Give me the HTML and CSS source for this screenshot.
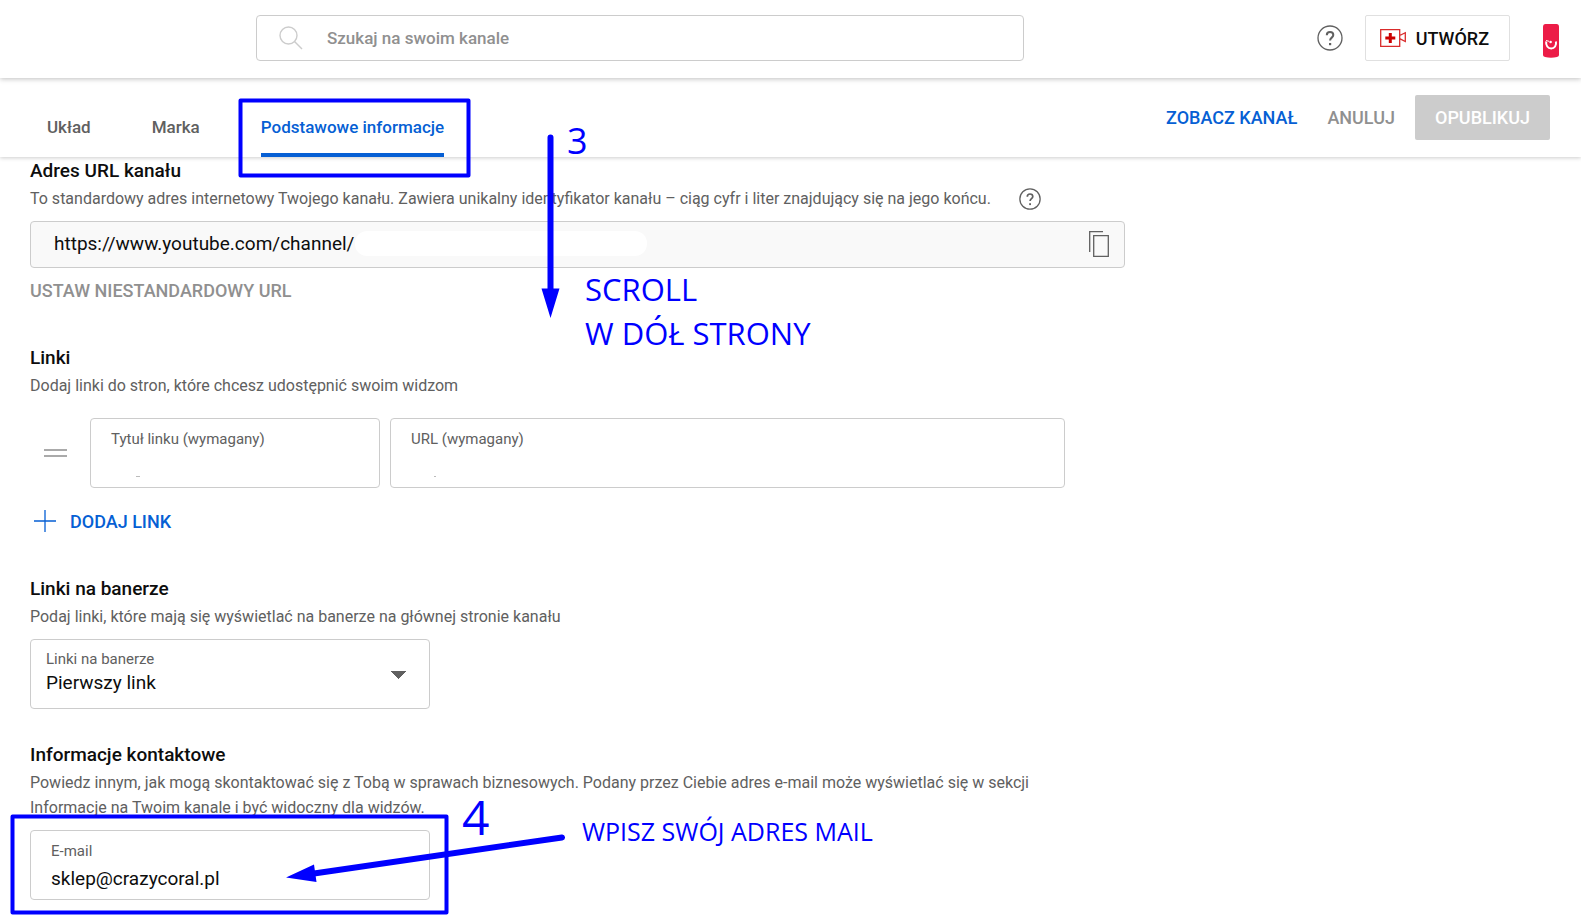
FILE: index.html
```
<!DOCTYPE html>
<html lang="pl">

<head>
  <meta charset="utf-8">
  <title>Dostosowywanie kanału</title>
  <link rel="stylesheet" href="styles.css">
</head>

<body>
  <header class="topbar">
    <label class="search">
      <svg width="24" height="24" viewBox="0 0 24 24" fill="none" stroke="#ccc" stroke-width="1.4" aria-hidden="true">
        <circle cx="9.5" cy="9.5" r="8.5"/>
        <path d="M15.5 15.5L23 23"/>
      </svg>
      <input type="text" placeholder="Szukaj na swoim kanale" aria-label="Szukaj na swoim kanale">
    </label>
    <div class="topbar-actions">
      <button class="icon-button" aria-label="Pomoc">
        <svg width="26" height="26" viewBox="0 0 26 26" fill="none" stroke="#606060" aria-hidden="true">
          <circle cx="13" cy="13" r="12" stroke-width="1.3"/>
          <path d="M9.8 10.3c0-2 1.4-3.2 3.2-3.2s3.3 1.2 3.3 3c0 2.5-3.2 2.6-3.2 5.3" stroke-width="2"/>
          <path d="M13.1 18v2.2" stroke-width="2.2"/>
        </svg>
      </button>
      <button class="create">
        <svg width="26" height="18" viewBox="0 0 26 18" fill="none" stroke="#d92b2b" stroke-width="1.3" aria-hidden="true">
          <path d="M.7.7h19v16.6h-19zM19.7 6.500L25.300 3.700v8.800L19.700 9.700"/>
          <path d="M10.300 4v10M5.300 9h10" stroke="#c00" stroke-width="3"/>
        </svg>
        UTWÓRZ
      </button>
      <button class="icon-button" aria-label="Konto">
        <svg width="18" height="42" viewBox="0 -6 18 42" aria-hidden="true">
          <path d="M3.500 1h11Q17 1 17 4v28q0 1.500-2 2-6 1.500-12 0-2-.5-2-2V4q0-3 2.500-3z" fill="#ec1c47"/>
          <path d="M4.200 18.500c-.6 4 1.700 7 5 7s5.500-3 4.700-7" fill="none" stroke="#fff" stroke-width="2"/>
          <path d="M4 17.500l3 .8" stroke="#fff"/>
          <circle cx="8.600" cy="19" r="1.300" fill="#fff"/>
        </svg>
      </button>
    </div>
  </header>

  <div class="tabbar">
    <nav class="tabs">
      <a href="#uklad">Układ</a>
      <a href="#marka">Marka</a>
      <a href="#informacje" class="active">Podstawowe informacje</a>
    </nav>
    <div class="tabbar-actions">
      <a href="#kanal" class="view">ZOBACZ KANAŁ</a>
      <button class="cancel">ANULUJ</button>
      <button class="publish">OPUBLIKUJ</button>
    </div>
  </div>

  <main class="content">
    <section>
      <h2>Adres URL kanału</h2>
      <p class="with-help">
        To standardowy adres internetowy Twojego kanału. Zawiera unikalny identyfikator kanału – ciąg cyfr i liter znajdujący się na jego końcu.
        <button class="icon-button" aria-label="Pomoc: adres URL">
          <svg width="22" height="22" viewBox="0 0 26 26" fill="none" stroke="#606060" aria-hidden="true">
            <circle cx="13" cy="13" r="12" stroke-width="1.5"/>
            <path d="M9.8 10.3c0-2 1.4-3.2 3.2-3.2s3.3 1.2 3.3 3c0 2.5-3.2 2.6-3.2 5.3" stroke-width="2"/>
            <path d="M13.1 18v2.2" stroke-width="2.2"/>
          </svg>
        </button>
      </p>
      <div class="url-box">
        <input type="text" value="https://www.youtube.com/channel/" aria-label="Adres URL kanału" readonly>
        <span class="erased"></span>
        <button class="icon-button" aria-label="Kopiuj">
          <svg width="20" height="26" viewBox="0 0 20 26" fill="none" stroke="#606060" stroke-width="1.3" aria-hidden="true">
            <path d="M14 .7H.7V21"/>
            <path d="M4.7 4.7h14.6v20.6H4.7z"/>
          </svg>
        </button>
      </div>
      <button class="text-button muted">USTAW NIESTANDARDOWY URL</button>
    </section>

    <section>
      <h2>Linki</h2>
      <p>Dodaj linki do stron, które chcesz udostępnić swoim widzom</p>
      <div class="link-row">
        <span class="drag"></span>
        <div class="field link-title">
          <label for="link-title">Tytuł linku (wymagany)</label>
          <input type="text" id="link-title">
        </div>
        <div class="field link-url">
          <label for="link-url">URL (wymagany)</label>
          <input type="text" id="link-url">
        </div>
      </div>
      <button class="text-button add">
        <svg width="22" height="22" viewBox="0 0 22 22" stroke="#065fd4" stroke-width="1.3" aria-hidden="true">
          <path d="M11 0v22M0 11h22"/>
        </svg>
        DODAJ LINK
      </button>
    </section>

    <section>
      <h2>Linki na banerze</h2>
      <p>Podaj linki, które mają się wyświetlać na banerze na głównej stronie kanału</p>
      <div class="field select">
        <label for="banner">Linki na banerze</label>
        <select id="banner">
          <option>Pierwszy link</option>
        </select>
      </div>
    </section>

    <section>
      <h2>Informacje kontaktowe</h2>
      <p>Powiedz innym, jak mogą skontaktować się z Tobą w sprawach biznesowych. Podany przez Ciebie adres e-mail może wyświetlać się w sekcji Informacje na Twoim kanale i być widoczny dla widzów.</p>
      <div class="field email">
        <label for="email">E-mail</label>
        <input type="email" id="email" value="sklep@crazycoral.pl">
      </div>
    </section>
  </main>

  <!-- tutorial marks drawn over the page -->
  <div class="marks">
    <svg width="1000" height="924" viewBox="0 0 1000 924" fill="none" stroke="#00f" aria-hidden="true">
      <rect x="240.5" y="100.5" width="228" height="75" stroke-width="4" stroke-linejoin="round"/>
      <rect x="12.5" y="816.5" width="434" height="96" stroke-width="4" stroke-linejoin="round"/>
      <path d="M550.5 137.5V290M562 837.5L314 873.5" stroke-width="6" stroke-linecap="round"/>
      <path d="M541.5 288.5h18L550.5 318zM286 877.500L314 864.500 316.500 882z" fill="#00f" stroke="none"/>
      <path d="M136 476.5h4M434 476.5h2" stroke="#bbb"/>
    </svg>
    <span class="mark step-3">3</span>
    <span class="mark scroll">SCROLL<br>W DÓŁ STRONY</span>
    <span class="mark step-4">4</span>
    <span class="mark mail">WPISZ SWÓJ ADRES MAIL</span>
  </div>
</body>

</html>
```

FILE: styles.css
```
* {
  box-sizing: border-box;
}

body {
  position: relative;
  margin: 0;
  font-family: Roboto, sans-serif;
  font-size: 16px;
  color: #0d0d0d;
  background: #fff;
}

button,
input,
select {
  margin: 0;
  padding: 0;
  border: 0;
  outline: 0;
  background: none;
  font: inherit;
  color: inherit;
}

button {
  cursor: pointer;
}

a {
  text-decoration: none;
}

svg {
  display: block;
  flex-shrink: 0;
}

.icon-button {
  display: flex;
}

/* top bar */
.topbar {
  position: relative;
  z-index: 2;
  display: flex;
  align-items: center;
  height: 78px;
  padding: 0 21px 2px 256px;
  background: #fff;
  box-shadow: 0 1px 5px rgba(0,0,0,0.25);
}

.search {
  display: flex;
  align-items: center;
  flex: 0 1 768px;
  height: 46px;
  padding: 0 22px;
  border: 1px solid #ccc;
  border-radius: 4px;
}

.search input {
  flex: 1;
  margin-left: 24px;
  font-size: 17px;
  font-weight: 500;
}

.search input::placeholder {
  color: #909090;
}

.topbar-actions {
  display: flex;
  align-items: center;
  margin-left: auto;
}

.create {
  display: flex;
  align-items: center;
  gap: 10px;
  height: 46px;
  margin: 0 32px 0 22px;
  padding: 0 20px 0 14px;
  border: 1px solid #e0e0e0;
  border-radius: 2px;
  font-size: 18px;
  font-weight: 500;
}

/* tabs */
.tabbar {
  position: relative;
  z-index: 1;
  display: flex;
  justify-content: space-between;
  height: 79px;
  padding: 0 31px 0 47px;
  background: #fff;
  box-shadow: 0 1px 4px rgba(0,0,0,0.2);
}

.tabs {
  display: flex;
  gap: 61px;
  font-size: 17px;
  font-weight: 500;
  line-height: 24px;
}

.tabs a {
  padding-top: 37px;
  color: #606060;
}

.tabs .active {
  color: #065fd4;
  border-bottom: 4px solid #065fd4;
  border-radius: 2px 2px 0 0;
}

.tabbar-actions {
  display: flex;
  align-items: center;
  font-size: 18px;
  font-weight: 500;
}

.view {
  color: #065fd4;
}

.cancel {
  margin: 0 20px 0 30px;
  color: #909090;
}

.publish {
  height: 45px;
  padding: 0 20px;
  border-radius: 2px;
  background: #ccc;
  color: #fff;
}

/* form */
.content {
  max-width: 1155px;
  padding: 2px 30px 24px;
}

section {
  margin-bottom: 34px;
}

h2 {
  margin: 0 0 3px;
  font-size: 19px;
  font-weight: 500;
  line-height: 24px;
}

p {
  max-width: 1040px;
  margin: 0 0 10px;
  line-height: 25px;
  color: #606060;
}

.with-help {
  display: flex;
  align-items: center;
  gap: 28px;
}

.url-box {
  display: flex;
  align-items: center;
  height: 47px;
  padding: 0 15px 2px 23px;
  border: 1px solid #ccc;
  border-radius: 4px;
  background: #f9f9f9;
}

.url-box input {
  width: 301px;
  font-size: 19px;
}

.erased {
  width: 292px;
  height: 25px;
  margin-right: auto;
  border-radius: 12px;
  background: #fff;
}

.text-button {
  display: flex;
  align-items: center;
  gap: 14px;
  height: 44px;
  font-size: 18px;
  font-weight: 500;
}

.muted {
  color: #909090;
}

.add {
  padding-left: 4px;
  color: #065fd4;
}

.link-row {
  display: flex;
  align-items: center;
  gap: 10px;
  margin: 20px 60px 11px 0;
}

.drag {
  width: 23px;
  height: 8px;
  margin: 0 13px 0 14px;
  border: solid #aaa;
  border-width: 2px 0;
}

.field {
  display: flex;
  flex-direction: column;
  height: 70px;
  padding: 10px 20px;
  border: 1px solid #ccc;
  border-radius: 4px;
}

.field label {
  font-size: 15px;
  line-height: 20px;
  color: #606060;
}

.field input,
.field select {
  font-size: 19px;
  line-height: 24px;
}

.link-title {
  flex: 0 1 290px;
}

.link-url {
  flex: 1;
}

.select,
.email {
  max-width: 400px;
}

.select {
  padding: 9px 15px;
}

.select select {
  width: 100%;
  height: 28px;
  appearance: none;
  background: linear-gradient(to bottom left, #606060 50%, transparent 50%) right 15px top 2px / 8px 8px no-repeat,
    linear-gradient(to bottom right, #606060 50%, transparent 50%) right 7px top 2px / 8px 8px no-repeat;
}

.email input {
  margin-top: 6px;
}

/* overlay */
.marks {
  position: absolute;
  top: 0;
  left: 0;
  z-index: 3;
  pointer-events: none;
}

.mark {
  position: absolute;
  font-family: "Open Sans", sans-serif;
  color: #00f;
  line-height: 44px;
  white-space: nowrap;
}

.step-3 {
  top: 119px;
  left: 567px;
  font-size: 36px;
}

.scroll {
  top: 267px;
  left: 585px;
  font-size: 31px;
}

.step-4 {
  top: 795px;
  left: 462px;
  font-size: 48px;
}

.mail {
  top: 809px;
  left: 582px;
  font-size: 25px;
}
```
